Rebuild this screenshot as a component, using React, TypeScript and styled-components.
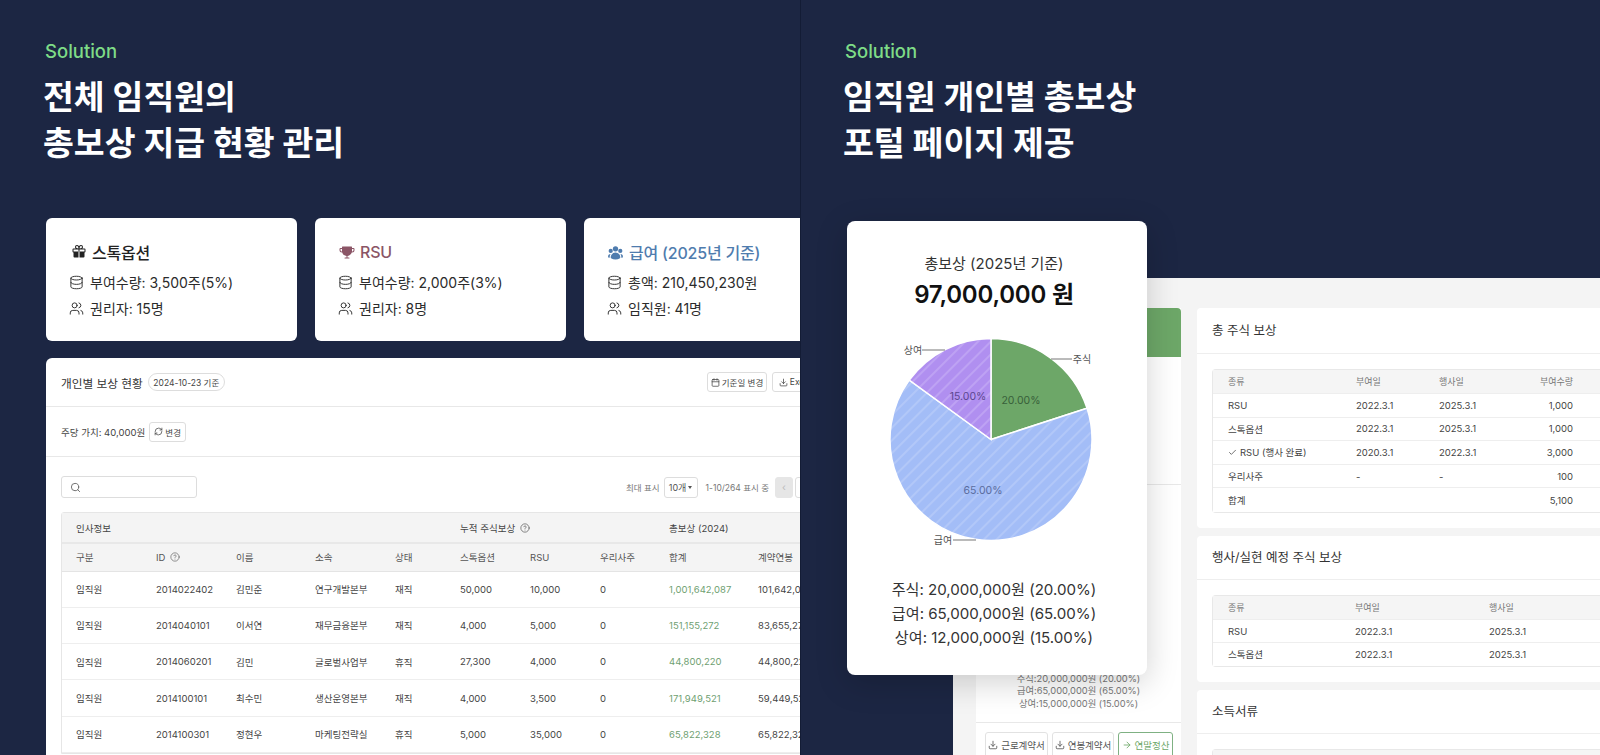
import React from "react";
import styled, { createGlobalStyle } from "styled-components";
import {
  ArrowRight,
  Calendar,
  Check,
  CircleHelp,
  Database,
  Download,
  RefreshCw,
  Search,
  Users,
} from "lucide-react";
import { PiGiftFill, PiTrophyFill } from "react-icons/pi";
import { HiUserGroup } from "react-icons/hi2";

const FONT = `Inter, "Noto Sans CJK KR", sans-serif`;

const GlobalStyle = createGlobalStyle`
  html, body { margin: 0; padding: 0; background: #1c2643; }
  body { font-family: ${FONT}; overflow: hidden; }
  * { box-sizing: border-box; }
`;

const Page = styled.div`
  width: 1600px;
  height: 755px;
  display: flex;
  overflow: hidden;
  background: #1c2643;
`;

const Panel = styled.section<{ $divider?: boolean }>`
  position: relative;
  width: 800px;
  height: 755px;
  flex-shrink: 0;
  overflow: hidden;
  padding-top: 40px;
  border-left: ${(p) => (p.$divider ? "1px solid #131c35" : "none")};
`;

const Heading = styled.header<{ $left: number }>`
  padding-left: ${(p) => p.$left}px;
`;

const Eyebrow = styled.div`
  font-size: 18.5px;
  line-height: 22px;
  font-weight: 500;
  color: #7edc87;
`;

const Title = styled.h1`
  margin: 12px 0 0 -2px;
  font-family: ${FONT};
  font-size: 33.5px;
  line-height: 46px;
  font-weight: 700;
  color: #fff;
`;

/* left panel: summary cards */
const CardRow = styled.div`
  display: flex;
  gap: 18px;
  margin: 52px 0 0 46px;
`;

const SummaryCard = styled.article`
  width: 251px;
  height: 123px;
  flex-shrink: 0;
  background: #fff;
  border-radius: 6px;
  padding: 22px 0 0 23px;
`;

const CardTitle = styled.div<{ $color: string; $indent: number }>`
  display: flex;
  align-items: center;
  gap: 5px;
  height: 24px;
  margin-left: ${(p) => p.$indent}px;
  font-size: 16px;
  font-weight: 500;
  letter-spacing: -0.2px;
  color: ${(p) => p.$color};
`;

const CardLine = styled.div`
  display: flex;
  align-items: center;
  gap: 6px;
  height: 26px;
  font-size: 14px;
  color: #2b2b2b;
  &:nth-child(2) {
    margin-top: 5px;
  }
`;

/* left panel: table board */
const Board = styled.div`
  width: 800px;
  margin: 17px 0 0 46px;
  padding-bottom: 40px;
  background: #fff;
  border-radius: 6px 0 0 0;
`;

const BoardHeader = styled.div`
  display: flex;
  align-items: center;
  gap: 5px;
  height: 49px;
  padding: 0 28px 0 15px;
  border-bottom: 1px solid #e8e8e8;
`;

const BoardTitle = styled.span`
  font-size: 11.7px;
  font-weight: 400;
  color: #333;
`;

const Badge = styled.span`
  height: 18px;
  padding: 0 4.5px;
  display: inline-flex;
  align-items: center;
  border: 1px solid #ddd;
  border-radius: 9px;
  font-size: 8.5px;
  color: #444;
`;

const ToolButton = styled.button<{ $w: number }>`
  width: ${(p) => p.$w}px;
  height: 20px;
  padding: 0;
  display: inline-flex;
  align-items: center;
  justify-content: center;
  gap: 2px;
  flex-shrink: 0;
  background: #fff;
  border: 1px solid #ddd;
  border-radius: 3px;
  font-family: ${FONT};
  font-size: 8.5px;
  color: #444;
`;

const Actions = styled.div`
  display: flex;
  gap: 5px;
  margin-left: auto;
`;

const PriceBar = styled.div`
  display: flex;
  align-items: center;
  gap: 4px;
  height: 50px;
  padding-left: 15px;
  font-size: 9.5px;
  color: #444;
  border-bottom: 1px solid #e8e8e8;
`;

const SearchRow = styled.div`
  display: flex;
  align-items: center;
  height: 54px;
  padding: 4px 15px 0;
  margin-top: 1px;
`;

const SearchBox = styled.div`
  width: 136px;
  height: 22px;
  display: flex;
  align-items: center;
  padding-left: 8px;
  border: 1px solid #ddd;
  border-radius: 3px;
  color: #666;
`;

const PagerLabel = styled.span<{ $first?: boolean }>`
  font-size: 8.5px;
  color: #777;
  margin-left: ${(p) => (p.$first ? "auto" : "0")};
`;

const PageSize = styled.span`
  width: 34px;
  height: 21px;
  margin: 0 8px 0 4px;
  display: inline-flex;
  align-items: center;
  justify-content: center;
  gap: 2px;
  border: 1px solid #ddd;
  border-radius: 3px;
  font-size: 9px;
  color: #555;
  &::after {
    content: "";
    border-left: 2.5px solid transparent;
    border-right: 2.5px solid transparent;
    border-top: 3px solid #555;
  }
`;

const PagerButton = styled.span<{ $disabled?: boolean; $w: number; $gap: number }>`
  width: ${(p) => p.$w}px;
  height: 21px;
  margin-left: ${(p) => p.$gap}px;
  display: inline-flex;
  align-items: center;
  justify-content: center;
  font-size: 10px;
  color: #bbb;
  border-radius: 3px;
  background: ${(p) => (p.$disabled ? "#e6e6e6" : "#fff")};
  border: 1px solid ${(p) => (p.$disabled ? "#e6e6e6" : "#ddd")};
`;

const TableWrap = styled.div`
  margin-left: 15px;
  width: 770px;
  border: 1px solid #e6e6e6;
  border-radius: 3px 0 0 0;
`;

const CompTable = styled.table`
  width: 770px;
  table-layout: fixed;
  border-collapse: collapse;
`;

const GroupHead = styled.th`
  height: 30px;
  padding: 0 0 0 14px;
  text-align: left;
  font-size: 9.5px;
  font-weight: 400;
  color: #444;
  background: #f4f4f4;
  border-bottom: 2px solid #e8e8e8;
`;

const SubHead = styled.th`
  height: 28px;
  padding: 0 0 0 14px;
  text-align: left;
  font-size: 9.5px;
  font-weight: 400;
  color: #555;
  background: #f4f4f4;
  border-bottom: 1px solid #e4e4e4;
`;

const Cell = styled.td<{ $green?: boolean }>`
  height: 36.3px;
  padding: 0 0 0 14px;
  font-size: 9.5px;
  white-space: nowrap;
  color: ${(p) => (p.$green ? "#6f9f72" : "#444")};
  border-bottom: 1.5px solid #eeeeee;
`;

const HeadInner = styled.span`
  display: inline-flex;
  align-items: center;
  gap: 5px;
`;

/* right panel: portal page behind the overlay */
const Portal = styled.div`
  display: flex;
  gap: 16px;
  width: 647px;
  height: 480px;
  margin: 112px 0 0 152px;
  padding: 30px 0 0 23px;
  background: #f4f4f4;
`;

const SideColumn = styled.aside`
  width: 205px;
  flex-shrink: 0;
  background: #fff;
  display: flex;
  flex-direction: column;
`;

const GreenHead = styled.div`
  height: 49px;
  background: #6da768;
  border-radius: 4px 4px 0 0;
`;

const SideBlock = styled.div`
  height: 128px;
  border-bottom: 1px solid #e8e8e8;
`;

const SideShare = styled.div`
  height: 239px;
  padding-bottom: 12px;
  display: flex;
  flex-direction: column;
  justify-content: flex-end;
  align-items: center;
  border-bottom: 1px solid #e8e8e8;
  font-size: 9.3px;
  line-height: 12.5px;
  color: #777;
`;

const SideActions = styled.div`
  display: flex;
  gap: 4px;
  padding: 9px 0 0 9px;
`;

const DocButton = styled.button<{ $w: number; $accent?: boolean }>`
  width: ${(p) => p.$w}px;
  height: 26px;
  padding: 0;
  display: inline-flex;
  align-items: center;
  justify-content: center;
  gap: 3px;
  flex-shrink: 0;
  background: #fff;
  border: 1px solid ${(p) => (p.$accent ? "#7fb183" : "#e2e2e2")};
  border-radius: 3px;
  font-family: ${FONT};
  font-size: 9.5px;
  color: ${(p) => (p.$accent ? "#6da768" : "#555")};
`;

const MainColumn = styled.div`
  width: 430px;
  flex-shrink: 0;
  display: flex;
  flex-direction: column;
  gap: 8.5px;
`;

const InfoCard = styled.div`
  background: #fff;
  border-radius: 4px;
  padding-bottom: 15px;
`;

const InfoTitle = styled.div<{ $h: number }>`
  height: ${(p) => p.$h}px;
  padding: 0 0 2px 15px;
  display: flex;
  align-items: center;
  font-size: 12.5px;
  color: #333;
  border-bottom: 1px solid #eeeeee;
  margin-bottom: 15px;
`;

const InfoTable = styled.div`
  margin-left: 15px;
  border: 1px solid #e8e8e8;
  border-radius: 4px 0 0 4px;
  border-right: none;
`;

const InfoRow = styled.div<{ $head?: boolean; $cols: string; $h?: number }>`
  display: grid;
  grid-template-columns: ${(p) => p.$cols};
  align-items: center;
  height: ${(p) => (p.$head ? 24 : (p.$h ?? 23.6))}px;
  padding-left: 15px;
  font-size: ${(p) => (p.$head ? "9px" : "9.5px")};
  color: ${(p) => (p.$head ? "#777" : "#444")};
  background: ${(p) => (p.$head ? "#f5f5f5" : "#fff")};
  &:not(:last-child) {
    border-bottom: 1px solid #eeeeee;
  }
`;

const RightAligned = styled.span`
  text-align: right;
`;

const CheckedName = styled.span`
  display: inline-flex;
  align-items: center;
  gap: 3px;
`;

/* right panel: total compensation overlay */
const TotalCard = styled.div`
  position: absolute;
  left: 46px;
  top: 221px;
  width: 300px;
  height: 454px;
  padding: 32px 6px 0 0;
  background: #fff;
  border-radius: 8px;
  box-shadow: 0 8px 32px rgba(0, 0, 0, 0.18);
  text-align: center;
`;

const TotalLabel = styled.div`
  font-size: 15px;
  line-height: 22px;
  color: #333;
`;

const TotalAmount = styled.div`
  font-size: 24px;
  line-height: 32px;
  margin-top: 4px;
  font-weight: 600;
  letter-spacing: -0.2px;
  color: #111;
`;

const PieFrame = styled.svg`
  display: block;
  margin-top: 16px;
`;

const Legend = styled.div`
  margin-top: 21px;
  font-size: 15.1px;
  line-height: 24px;
  color: #333;
`;

const CENTER = { x: 144, y: 112.5 };
const RADIUS = 101;

function slice(from: number, to: number) {
  const pt = (pct: number) => {
    const a = (pct / 100) * Math.PI * 2;
    return `${CENTER.x + RADIUS * Math.sin(a)} ${CENTER.y - RADIUS * Math.cos(a)}`;
  };
  const large = to - from > 50 ? 1 : 0;
  return `M${CENTER.x} ${CENTER.y} L${pt(from)} A${RADIUS} ${RADIUS} 0 ${large} 1 ${pt(to)} Z`;
}

const PieChart = () => (
  <PieFrame width="300" height="230" viewBox="0 0 300 230">
    <defs>
      <pattern id="blueStripe" width="9" height="9" patternUnits="userSpaceOnUse" patternTransform="rotate(45)">
        <rect width="9" height="9" fill="#a3bdf7" />
        <line x1="4" y1="0" x2="4" y2="9" stroke="#bccff9" strokeWidth="1.2" />
      </pattern>
      <pattern id="purpleStripe" width="9" height="9" patternUnits="userSpaceOnUse" patternTransform="rotate(45)">
        <rect width="9" height="9" fill="#b08ff0" />
        <line x1="4" y1="0" x2="4" y2="9" stroke="#c7aff5" strokeWidth="1.2" />
      </pattern>
    </defs>
    <path d={slice(0, 20)} fill="#6da768" stroke="#fff" strokeWidth="1.5" />
    <path d={slice(20, 85)} fill="url(#blueStripe)" stroke="#fff" strokeWidth="1.5" />
    <path d={slice(85, 100)} fill="url(#purpleStripe)" stroke="#fff" strokeWidth="1.5" />
    <g stroke="#777" strokeWidth="1">
      <line x1="204" y1="32" x2="225" y2="32" />
      <line x1="75" y1="23" x2="98" y2="23" />
      <line x1="106" y1="213" x2="129" y2="213" />
    </g>
    <g fontSize="10" fill="#555" textAnchor="middle" dominantBaseline="central" fontFamily={FONT}>
      <text x="235" y="32">주식</text>
      <text x="66" y="23">상여</text>
      <text x="96" y="213">급여</text>
    </g>
    <g fontSize="10.5" textAnchor="middle" dominantBaseline="central" fontFamily={FONT}>
      <text x="174" y="73" fill="#38603a">20.00%</text>
      <text x="121" y="69" fill="#5b4690">15.00%</text>
      <text x="136" y="163" fill="#5a6c9e">65.00%</text>
    </g>
  </PieFrame>
);

const summaries = [
  {
    title: "스톡옵션",
    color: "#222",
    indent: 2,
    icon: <PiGiftFill size={16} />,
    lines: ["부여수량: 3,500주(5%)", "권리자: 15명"],
  },
  {
    title: "RSU",
    color: "#8b5566",
    indent: 1,
    icon: <PiTrophyFill size={16} />,
    lines: ["부여수량: 2,000주(3%)", "권리자: 8명"],
  },
  {
    title: "급여 (2025년 기준)",
    color: "#4f7cae",
    indent: 0,
    icon: <HiUserGroup size={17} />,
    lines: ["총액: 210,450,230원", "임직원: 41명"],
  },
];

const people = [
  ["2014022402", "김민준", "연구개발본부", "재직", "50,000", "10,000", "1,001,642,087", "101,642,087"],
  ["2014040101", "이서연", "재무금융본부", "재직", "4,000", "5,000", "151,155,272", "83,655,272"],
  ["2014060201", "김민", "글로벌사업부", "휴직", "27,300", "4,000", "44,800,220", "44,800,220"],
  ["2014100101", "최수민", "생산운영본부", "재직", "4,000", "3,500", "171,949,521", "59,449,521"],
  ["2014100301", "정현우", "마케팅전략실", "휴직", "5,000", "35,000", "65,822,328", "65,822,328"],
];

const colWidths = [80, 80, 79, 80, 65, 70, 70, 69, 89, 88];

const STOCK_COLS = "128px 83px 78px 56px";
const PLAN_COLS = "127px 134px 1fr";

const stockRows = [
  ["RSU", "2022.3.1", "2025.3.1", "1,000"],
  ["스톡옵션", "2022.3.1", "2025.3.1", "1,000"],
  ["CHECK", "2020.3.1", "2022.3.1", "3,000"],
  ["우리사주", "-", "-", "100"],
  ["합계", "", "", "5,100"],
];

export default function App() {
  return (
    <Page>
      <GlobalStyle />
      <Panel>
        <Heading $left={45}>
          <Eyebrow>Solution</Eyebrow>
          <Title>
            전체 임직원의
            <br />
            총보상 지급 현황 관리
          </Title>
        </Heading>
        <CardRow>
          {summaries.map((s) => (
            <SummaryCard key={s.title}>
              <CardTitle $color={s.color} $indent={s.indent}>
                {s.icon}
                {s.title}
              </CardTitle>
              <CardLine>
                <Database size={15} strokeWidth={1.5} />
                {s.lines[0]}
              </CardLine>
              <CardLine>
                <Users size={15} strokeWidth={1.5} />
                {s.lines[1]}
              </CardLine>
            </SummaryCard>
          ))}
        </CardRow>
        <Board>
          <BoardHeader>
            <BoardTitle>개인별 보상 현황</BoardTitle>
            <Badge>2024-10-23 기준</Badge>
            <Actions>
              <ToolButton $w={60}>
                <Calendar size={9} />
                기준일 변경
              </ToolButton>
              <ToolButton $w={46}>
                <Download size={9} />
                Excel
              </ToolButton>
            </Actions>
          </BoardHeader>
          <PriceBar>
            주당 가치: 40,000원
            <ToolButton $w={37}>
              <RefreshCw size={9} />
              변경
            </ToolButton>
          </PriceBar>
          <SearchRow>
            <SearchBox>
              <Search size={11} />
            </SearchBox>
            <PagerLabel $first>최대 표시</PagerLabel>
            <PageSize>10개</PageSize>
            <PagerLabel>1-10/264 표시 중</PagerLabel>
            <PagerButton $disabled $w={18} $gap={6}>‹</PagerButton>
            <PagerButton $w={36} $gap={2}>›</PagerButton>
          </SearchRow>
          <TableWrap>
            <CompTable>
              <colgroup>
                {colWidths.map((w, i) => (
                  <col key={i} width={w} />
                ))}
              </colgroup>
              <thead>
                <tr>
                  <GroupHead colSpan={5}>인사정보</GroupHead>
                  <GroupHead colSpan={3}>
                    <HeadInner>
                      누적 주식보상 <CircleHelp size={10} strokeWidth={1.5} />
                    </HeadInner>
                  </GroupHead>
                  <GroupHead colSpan={2}>총보상 (2024)</GroupHead>
                </tr>
                <tr>
                  <SubHead>구분</SubHead>
                  <SubHead>
                    <HeadInner>
                      ID <CircleHelp size={10} strokeWidth={1.5} />
                    </HeadInner>
                  </SubHead>
                  <SubHead>이름</SubHead>
                  <SubHead>소속</SubHead>
                  <SubHead>상태</SubHead>
                  <SubHead>스톡옵션</SubHead>
                  <SubHead>RSU</SubHead>
                  <SubHead>우리사주</SubHead>
                  <SubHead>합계</SubHead>
                  <SubHead>계약연봉</SubHead>
                </tr>
              </thead>
              <tbody>
                {people.map((p) => (
                  <tr key={p[0]}>
                    <Cell>임직원</Cell>
                    <Cell>{p[0]}</Cell>
                    <Cell>{p[1]}</Cell>
                    <Cell>{p[2]}</Cell>
                    <Cell>{p[3]}</Cell>
                    <Cell>{p[4]}</Cell>
                    <Cell>{p[5]}</Cell>
                    <Cell>0</Cell>
                    <Cell $green>{p[6]}</Cell>
                    <Cell>{p[7]}</Cell>
                  </tr>
                ))}
              </tbody>
            </CompTable>
          </TableWrap>
        </Board>
      </Panel>

      <Panel $divider>
        <Heading $left={44}>
          <Eyebrow>Solution</Eyebrow>
          <Title>
            임직원 개인별 총보상
            <br />
            포털 페이지 제공
          </Title>
        </Heading>
        <Portal>
          <SideColumn>
            <GreenHead />
            <SideBlock />
            <SideShare>
              <span>주식:20,000,000원 (20.00%)</span>
              <span>급여:65,000,000원 (65.00%)</span>
              <span>상여:15,000,000원 (15.00%)</span>
            </SideShare>
            <SideActions>
              <DocButton $w={63}>
                <Download size={10} />
                근로계약서
              </DocButton>
              <DocButton $w={62}>
                <Download size={10} />
                연봉계약서
              </DocButton>
              <DocButton $w={55} $accent>
                <ArrowRight size={10} />
                연말정산
              </DocButton>
            </SideActions>
          </SideColumn>
          <MainColumn>
            <InfoCard>
              <InfoTitle $h={46}>총 주식 보상</InfoTitle>
              <InfoTable>
                <InfoRow $head $cols={STOCK_COLS}>
                  <span>종류</span>
                  <span>부여일</span>
                  <span>행사일</span>
                  <RightAligned>부여수량</RightAligned>
                </InfoRow>
                {stockRows.map((r, i) => (
                  <InfoRow key={i} $cols={STOCK_COLS}>
                    {r[0] === "CHECK" ? (
                      <CheckedName>
                        <Check size={9} />
                        RSU (행사 완료)
                      </CheckedName>
                    ) : (
                      <span>{r[0]}</span>
                    )}
                    <span>{r[1]}</span>
                    <span>{r[2]}</span>
                    <RightAligned>{r[3]}</RightAligned>
                  </InfoRow>
                ))}
              </InfoTable>
            </InfoCard>
            <InfoCard>
              <InfoTitle $h={44}>행사/실현 예정 주식 보상</InfoTitle>
              <InfoTable>
                <InfoRow $head $cols={PLAN_COLS}>
                  <span>종류</span>
                  <span>부여일</span>
                  <span>행사일</span>
                </InfoRow>
                <InfoRow $cols={PLAN_COLS} $h={22.6}>
                  <span>RSU</span>
                  <span>2022.3.1</span>
                  <span>2025.3.1</span>
                </InfoRow>
                <InfoRow $cols={PLAN_COLS} $h={22.6}>
                  <span>스톡옵션</span>
                  <span>2022.3.1</span>
                  <span>2025.3.1</span>
                </InfoRow>
              </InfoTable>
            </InfoCard>
            <InfoCard>
              <InfoTitle $h={44}>소득서류</InfoTitle>
              <InfoTable>
                <InfoRow $head $cols={PLAN_COLS}>
                  <span>종류</span>
                  <span>부여일</span>
                  <span>행사일</span>
                </InfoRow>
              </InfoTable>
            </InfoCard>
          </MainColumn>
        </Portal>
        <TotalCard>
          <TotalLabel>총보상 (2025년 기준)</TotalLabel>
          <TotalAmount>97,000,000 원</TotalAmount>
          <PieChart />
          <Legend>
            <div>주식: 20,000,000원 (20.00%)</div>
            <div>급여: 65,000,000원 (65.00%)</div>
            <div>상여: 12,000,000원 (15.00%)</div>
          </Legend>
        </TotalCard>
      </Panel>
    </Page>
  );
}
